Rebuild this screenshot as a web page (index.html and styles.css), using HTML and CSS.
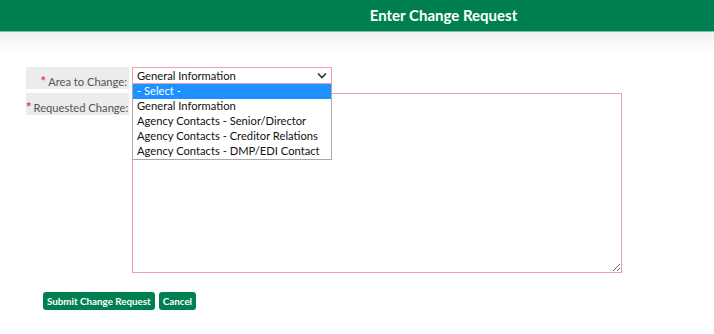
FILE: index.html
```html
<!DOCTYPE html>
<html lang="en">
<head>
  <meta charset="UTF-8" />
  <title>Enter Change Request</title>
  <link rel="stylesheet" href="styles.css">
</head>
<body>
  <div class="header">
    <h1 class="title">Enter Change Request</h1>
  </div>
  <div class="header-shadow"></div>

  <form class="request-form">
    <div class="form-grid">
      <label class="field-label"><span class="req">*</span>Area to Change:</label>
      <div class="select-wrap">
        <select class="area-select">
          <option>General Information</option>
        </select>
        <svg class="chevron" width="10" height="7" viewBox="0 0 10 7">
          <path d="M1 1.5 L5 5.5 L9 1.5" fill="none" stroke="#333" stroke-width="1.6"/>
        </svg>
        <ul class="dropdown">
          <li class="active">- Select -</li>
          <li>General Information</li>
          <li>Agency Contacts - Senior/Director</li>
          <li>Agency Contacts - Creditor Relations</li>
          <li>Agency Contacts - DMP/EDI Contact</li>
        </ul>
      </div>

      <label class="field-label"><span class="req">*</span>Requested Change:</label>
      <textarea class="change-text"></textarea>
    </div>

    <div class="actions">
      <button type="button" class="btn">Submit Change Request</button>
      <button type="button" class="btn">Cancel</button>
    </div>
  </form>
</body>
</html>
```

FILE: styles.css
```css
* {
  box-sizing: border-box;
  margin: 0;
  padding: 0;
}

body {
  font-family: 'Lato', 'Liberation Sans', sans-serif;
  background: #fff;
  color: #222;
}

.header {
  height: 32px;
  background: #008050;
  border-bottom: 1px solid #7fbfa6;
  padding-left: 173px;
  text-align: center;
}

.title {
  font-size: 15px;
  font-weight: bold;
  color: #fff;
  line-height: 31px;
}

.header-shadow {
  height: 20px;
  background: linear-gradient(#efefef, #ffffff);
}

.request-form {
  padding: 15px 0 0 26px;
}

.form-grid {
  display: grid;
  grid-template-columns: 103px 490px;
  column-gap: 3px;
  row-gap: 4px;
  align-items: start;
}

.field-label {
  display: block;
  height: 22px;
  background: #ececec;
  color: #555;
  font-size: 11.2px;
  text-align: right;
  padding: 6px 2px 0 0;
  white-space: nowrap;
}

.req {
  color: #e8336a;
  font-size: 13px;
  font-weight: bold;
  margin-right: 2px;
}

.select-wrap {
  position: relative;
  width: 200px;
}

.area-select {
  appearance: none;
  -webkit-appearance: none;
  display: block;
  width: 200px;
  height: 17px;
  border: 1px solid #f59bb1;
  background: #fff;
  font-family: inherit;
  font-size: 11.2px;
  color: #111;
  padding: 0 0 0 4px;
  outline: none;
}

.chevron {
  position: absolute;
  right: 5px;
  top: 5px;
}

.dropdown {
  position: absolute;
  top: 17px;
  left: 0;
  width: 200px;
  list-style: none;
  background: #fff;
  border: 1px solid #a9a9a9;
  border-top: none;
  z-index: 2;
}

.dropdown li {
  height: 15px;
  line-height: 14px;
  font-size: 11.2px;
  padding-left: 4px;
  color: #111;
  white-space: nowrap;
}

.dropdown li.active {
  background: #1e90ff;
  color: #fff;
}

.change-text {
  display: block;
  width: 490px;
  height: 180px;
  border: 1px solid #f59bb1;
  outline: none;
  resize: both;
}

.actions {
  display: flex;
  gap: 4px;
  margin: 19px 0 0 17px;
}

.btn {
  height: 18px;
  padding: 0 4px;
  background: #008050;
  color: #fff;
  border: none;
  border-radius: 3px;
  font-family: inherit;
  font-size: 9.8px;
  font-weight: bold;
}
```
